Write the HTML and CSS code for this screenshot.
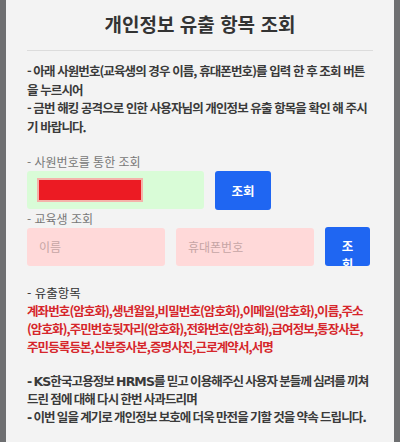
FILE: index.html
```html
<!DOCTYPE html>
<html lang="ko">
<head>
<meta charset="utf-8">
<title>개인정보 유출 항목 조회</title>
<link rel="stylesheet" href="styles.css">
</head>
<body>
<div class="panel">
  <h1 class="title">개인정보 유출 항목 조회</h1>

  <div class="intro">
    <p>- 아래 사원번호(교육생의 경우 이름, 휴대폰번호)를 입력 한 후 조회 버튼을 누르시어</p>
    <p>- 금번 해킹 공격으로 인한 사용자님의 개인정보 유출 항목을 확인 해 주시기 바랍니다.</p>
  </div>

  <div class="group">
    <div class="label">- 사원번호를 통한 조회</div>
    <div class="row">
      <div class="field field-green"><span class="redact"></span></div>
      <button class="btn btn-emp" type="button">조회</button>
    </div>
  </div>

  <div class="group group-edu">
    <div class="label">- 교육생 조회</div>
    <div class="row">
      <div class="field field-pink">이름</div>
      <div class="field field-pink">휴대폰번호</div>
      <button class="btn btn-narrow" type="button"><span>조회</span></button>
    </div>
  </div>

  <div class="leak">
    <div class="leak-head">- 유출항목</div>
    <p class="leak-list">계좌번호(암호화),생년월일,비밀번호(암호화),이메일(암호화),이름,주소(암호화),주민번호뒷자리(암호화),전화번호(암호화),급여정보,통장사본,주민등록등본,신분증사본,증명사진,근로계약서,서명</p>
  </div>

  <div class="apology">
    <p>- KS한국고용정보 HRMS를 믿고 이용해주신 사용자 분들께 심려를 끼쳐드린 점에 대해 다시 한번 사과드리며</p>
    <p>- 이번 일을 계기로 개인정보 보호에 더욱 만전을 기할 것을 약속 드립니다.</p>
  </div>
</div>
</body>
</html>
```

FILE: styles.css
```css
* { box-sizing: border-box; }

html, body {
  margin: 0;
  background: #6e6f71;
}

body {
  font-family: "Noto Sans CJK KR", "Noto Sans", sans-serif;
  color: #333;
}

.panel {
  margin: 0 6px;
  min-height: 442px;
  background: #f3f3f3;
  padding: 0 21px;
}

.title {
  margin: 0;
  height: 51px;
  line-height: 48px;
  font-size: 19px;
  font-weight: 700;
  text-align: center;
  color: #333;
  border-bottom: 1px solid #dcdcdc;
}

.intro p, .leak p, .apology p { margin: 0; }

.intro,
.leak-list,
.apology {
  font-size: 12.5px;
  font-weight: 700;
  letter-spacing: -0.9px;
}

.intro {
  margin-top: 11px;
  line-height: 18.5px;
  color: #3a3a3a;
}

.group { margin-top: 17px; }
.group-edu { margin-top: 0; }

.label {
  font-size: 12px;
  line-height: 17px;
  color: #777;
}

.row {
  display: flex;
  gap: 11px;
  margin-top: 1px;
}

.field {
  height: 38px;
  border-radius: 3px;
  font-size: 12px;
  line-height: 38px;
  padding-left: 12px;
  color: #c6a5a5;
}

.field-green {
  width: 177px;
  background: #d9fcd7;
  padding-top: 9px;
}

.field-pink {
  width: 138px;
  background: #ffd9d9;
}

.redact {
  display: block;
  width: 102px;
  height: 20px;
  background: #ec1b23;
  box-shadow: 0 0 0 2px #f5b2aa;
}

.btn {
  height: 39px;
  border: 0;
  border-radius: 3px;
  background: #1f66f2;
  color: #fff;
  font-family: inherit;
  font-size: 12.5px;
  font-weight: 700;
  padding: 0;
}

.btn-emp { width: 56px; }

.btn-narrow {
  width: 45px;
  display: flex;
  justify-content: center;
  align-items: flex-start;
  padding: 10px 12px 0;
  line-height: 18px;
  overflow: hidden;
  margin-top: -1px;
}

.leak { margin-top: 18px; }

.leak-head {
  font-size: 12.5px;
  line-height: 18px;
  color: #333;
}

.leak-list {
  line-height: 18px;
  color: #d6262b;
}

/* Latin words (KS, HRMS) set in a wide sans, Hangul from the CJK face */
.apology {
  margin-top: 17px;
  font-family: "DejaVu Sans", "Noto Sans CJK KR", sans-serif;
  line-height: 18px;
  word-spacing: -1.3px;
  color: #3a3a3a;
}
```
